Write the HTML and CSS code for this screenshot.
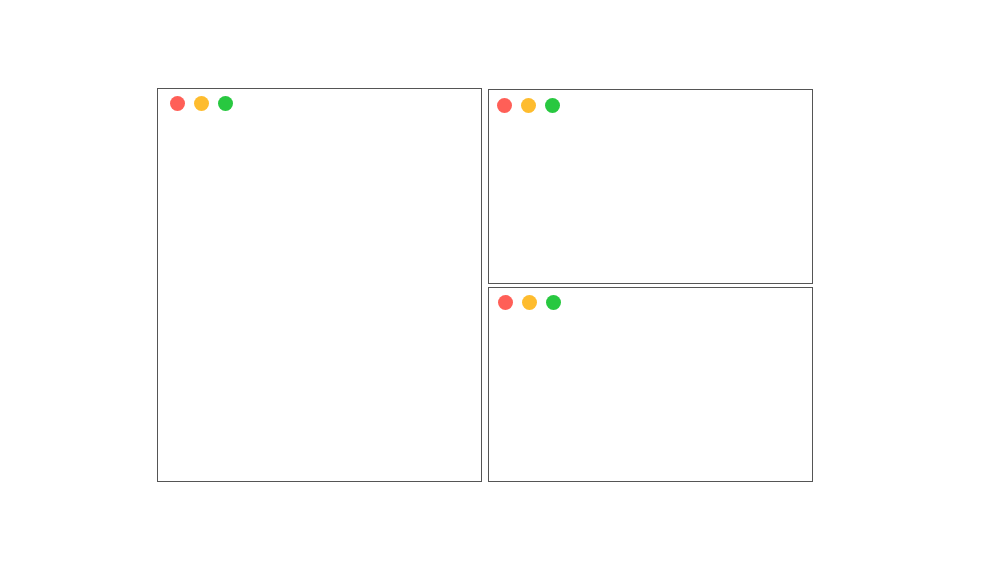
FILE: index.html
```html
<!DOCTYPE html>
<html>
<head>
<meta charset="utf-8">
<link rel="stylesheet" href="styles.css">
</head>
<body>
<div class="stage">
  <div class="window window-main">
    <div class="dots"><span class="dot red"></span><span class="dot yellow"></span><span class="dot green"></span></div>
  </div>
  <div class="column">
    <div class="window window-top">
      <div class="dots"><span class="dot red"></span><span class="dot yellow"></span><span class="dot green"></span></div>
    </div>
    <div class="window window-bottom">
      <div class="dots"><span class="dot red"></span><span class="dot yellow"></span><span class="dot green"></span></div>
    </div>
  </div>
</div>
</body>
</html>
```
FILE: styles.css
```css
html, body {
  margin: 0;
  padding: 0;
  background: #ffffff;
  font-family: "Liberation Sans", Arial, sans-serif;
}
.stage {
  display: flex;
  gap: 6px;
  padding: 88px 0 0 157px;
  align-items: flex-start;
}
.window {
  box-sizing: border-box;
  border: 1px solid #555555;
  background: #ffffff;
  width: 325px;
}
.window-main {
  height: 394px;
  padding: 7px 0 0 12px;
}
.column {
  display: flex;
  flex-direction: column;
  gap: 3px;
  margin-top: 1px;
}
.window-top {
  height: 195px;
  padding: 8px 0 0 8px;
}
.window-bottom {
  height: 195px;
  padding: 7px 0 0 9px;
}
.dots {
  display: flex;
  gap: 9px;
}
.dot {
  width: 15px;
  height: 15px;
  border-radius: 50%;
  display: block;
}
.red { background: #ff5f57; }
.yellow { background: #febc2e; }
.green { background: #28c840; }
```
